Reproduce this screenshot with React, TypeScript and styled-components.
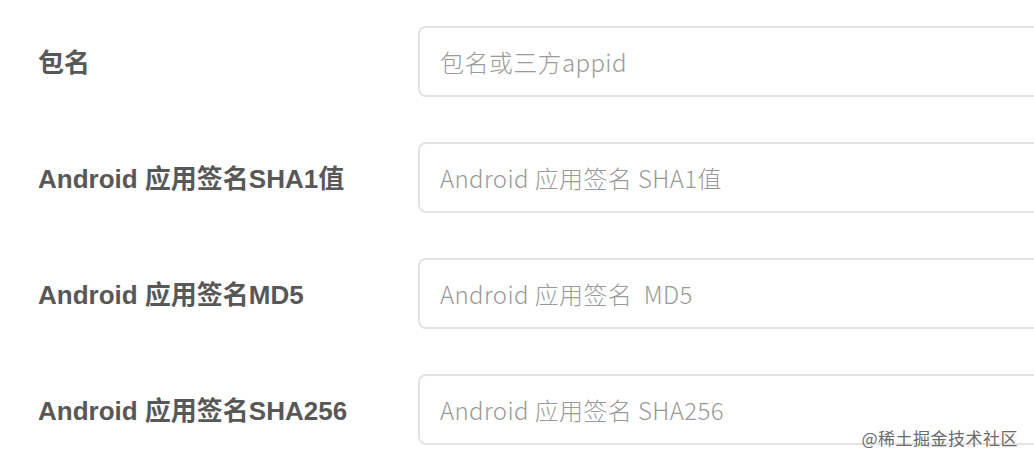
import React from "react";
import styled, { createGlobalStyle } from "styled-components";

const GlobalStyle = createGlobalStyle`
  html, body {
    margin: 0;
    padding: 0;
    background: #ffffff;
    overflow: hidden;
  }
`;

const Page = styled.div`
  position: relative;
  width: 1034px;
  height: 464px;
  overflow: hidden;
  background: #fff;
`;

const Form = styled.form`
  display: flex;
  flex-direction: column;
  gap: 45px;
  padding: 26px 0 0 38px;
`;

const Row = styled.div`
  display: grid;
  grid-template-columns: 380px 700px;
  align-items: center;
`;

const Label = styled.label`
  font-family: "Liberation Sans", "Noto Sans CJK SC", sans-serif;
  font-weight: 700;
  font-size: 26px;
  color: #585858;
  white-space: nowrap;
  margin-top: -2px;
`;

const Input = styled.input`
  box-sizing: border-box;
  height: 71px;
  width: 100%;
  border: 2px solid #e3e3e3;
  border-radius: 8px;
  padding: 0 20px;
  outline: none;
  font-family: "Noto Sans CJK SC", sans-serif;
  font-weight: 300;
  font-size: 24px;
  letter-spacing: 0.4px;
  color: #333;
  background: #fff;

  &::placeholder {
    color: #9a9a9a;
  }
`;

const Watermark = styled.div`
  position: absolute;
  right: 16px;
  bottom: 14px;
  font-family: "Noto Sans CJK SC", sans-serif;
  font-size: 17px;
  color: #6a6a6a;
  letter-spacing: 0.5px;
`;

const fields = [
  { label: "包名", placeholder: "包名或三方appid" },
  { label: "Android 应用签名SHA1值", placeholder: "Android 应用签名 SHA1值" },
  { label: "Android 应用签名MD5", placeholder: "Android 应用签名  MD5" },
  { label: "Android 应用签名SHA256", placeholder: "Android 应用签名 SHA256" },
];

export default function App() {
  return (
    <Page>
      <GlobalStyle />
      <Form>
        {fields.map((f) => (
          <Row key={f.label}>
            <Label>{f.label}</Label>
            <Input placeholder={f.placeholder} />
          </Row>
        ))}
      </Form>
      <Watermark>@稀土掘金技术社区</Watermark>
    </Page>
  );
}
